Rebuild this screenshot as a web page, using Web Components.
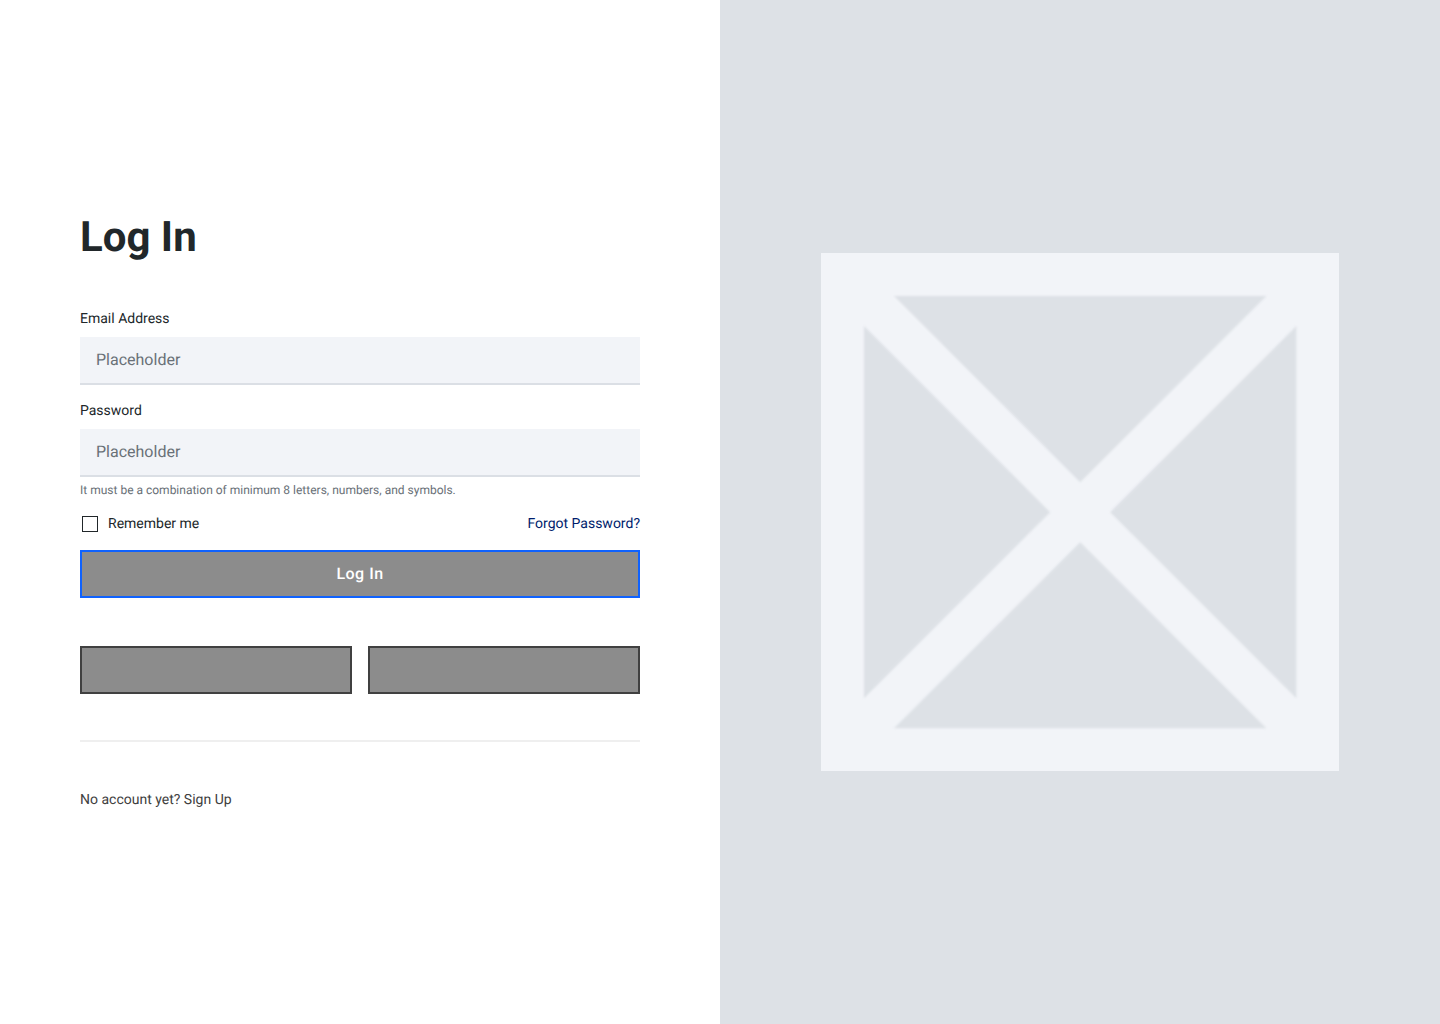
<!DOCTYPE html>
<html lang="en">
<head>
<meta charset="utf-8">
<meta name="viewport" content="width=device-width, initial-scale=1">
<title>Log In</title>
<style>
  body {
    margin: 0;
    font-family: Roboto, "Liberation Sans", sans-serif;
    text-rendering: geometricPrecision;
    color: #21272a;
    background: #fff;
    --field: #f2f4f8;
    --line: #dde1e6;
    --muted: #697077;
    --fill: #8c8c8c;
    --focus: #0f62fe;
    --link: #001d6c;
  }
</style>
</head>
<body>
<auth-layout>
  <login-form></login-form>
  <image-placeholder slot="media"></image-placeholder>
</auth-layout>

<script>
const define = (name, html, setup) => {
  const template = document.createElement('template');
  template.innerHTML = html;
  customElements.define(name, class extends HTMLElement {
    constructor() {
      super();
      this.attachShadow({ mode: 'open' }).append(template.content.cloneNode(true));
    }
    connectedCallback() {
      if (setup) setup(this, this.shadowRoot);
    }
  });
};

define('auth-layout', `
  <style>
    :host { display: grid; grid-template-columns: 1fr 1fr; min-height: 100vh; }
    main { display: flex; flex-direction: column; justify-content: center; padding: 0 80px; }
    aside { display: flex; align-items: center; justify-content: center; background: var(--line); }
  </style>
  <main><slot></slot></main>
  <aside><slot name="media"></slot></aside>
`);

define('text-field', `
  <style>
    :host { display: block; }
    label { display: block; font-size: 14px; line-height: 20px; margin-bottom: 8px; }
    input {
      display: block; box-sizing: border-box; width: 100%; height: 48px;
      margin: 0; padding: 0 16px; border: 0; border-bottom: 2px solid #dbdfe5;
      border-radius: 0; background: var(--field); color: inherit;
      font: 16px/22px Roboto, "Liberation Sans", sans-serif;
      text-rendering: inherit;
    }
    input::placeholder { color: var(--muted); opacity: 1; }
    p { margin: 5px 0 0; font-size: 12px; line-height: 16px; color: var(--muted); }
    p:empty { display: none; }
  </style>
  <label for="input"></label>
  <input id="input" placeholder="Placeholder" aria-describedby="hint">
  <p id="hint"></p>
`, (host, root) => {
  root.querySelector('label').textContent = host.getAttribute('label');
  root.querySelector('input').type = host.getAttribute('type') || 'text';
  root.querySelector('p').textContent = host.getAttribute('hint') || '';
});

define('check-field', `
  <style>
    :host { display: block; }
    label { display: flex; align-items: center; gap: 8px; font-size: 14px; line-height: 20px; }
    input {
      appearance: none; box-sizing: border-box; width: 16px; height: 16px;
      margin: 2px; border: 1px solid #21272a; background: #fff;
    }
    input:checked { background: #21272a; box-shadow: inset 0 0 0 2px #fff; }
  </style>
  <label><input type="checkbox"><span><slot></slot></span></label>
`);

define('block-button', `
  <style>
    :host { display: block; flex: 1; }
    button {
      display: block; box-sizing: border-box; width: 100%; height: 48px;
      margin: 0; padding: 0 16px; border: 2px solid #404040; border-radius: 0;
      background: var(--fill); color: #fff; letter-spacing: 0.5px;
      font: 500 16px/16px Roboto, "Liberation Sans", sans-serif;
      text-rendering: inherit;
    }
    :host([primary]) button { border-color: var(--focus); }
  </style>
  <button type="button"><slot></slot></button>
`, (host, root) => {
  const name = host.getAttribute('label');
  if (name) root.querySelector('button').setAttribute('aria-label', name);
});

define('login-form', `
  <style>
    :host { display: block; }
    h1 { margin: 0 0 48px; font-size: 42px; line-height: 46px; font-weight: 700; }
    form { display: flex; flex-direction: column; gap: 16px; }
    .row { display: flex; justify-content: space-between; align-items: center; }
    .options { display: flex; gap: 16px; margin-top: 48px; }
    a { font-size: 14px; line-height: 20px; color: var(--link); text-decoration: none; }
    hr { height: 2px; margin: 46px 0 48px; border: 0; background: #efefef; }
    p { margin: 0; font-size: 14px; line-height: 20px; color: #404040; }
    p a { color: inherit; }
  </style>
  <h1>Log In</h1>
  <form>
    <text-field label="Email Address" type="email"></text-field>
    <text-field label="Password" type="password" hint="It must be a combination of minimum 8 letters, numbers, and symbols."></text-field>
    <div class="row">
      <check-field>Remember me</check-field>
      <a href="#forgot">Forgot Password?</a>
    </div>
    <block-button primary>Log In</block-button>
  </form>
  <div class="options">
    <block-button label="First sign-in provider"></block-button>
    <block-button label="Second sign-in provider"></block-button>
  </div>
  <hr>
  <p>No account yet? <a href="#signup">Sign Up</a></p>
`);

define('image-placeholder', `
  <style>
    :host { display: block; width: 72%; }
    svg { display: block; width: 100%; height: auto; }
    .frame { fill: var(--field); }
    .panes { fill: var(--line); filter: blur(0.8px); }
  </style>
  <svg viewBox="0 0 518 518" aria-hidden="true">
    <rect class="frame" width="518" height="518"/>
    <path class="panes" d="M73 43H445L259 229ZM43 73V445L229 259ZM475 73V445L289 259ZM73 475H445L259 289Z"/>
  </svg>
`);
</script>
</body>
</html>
